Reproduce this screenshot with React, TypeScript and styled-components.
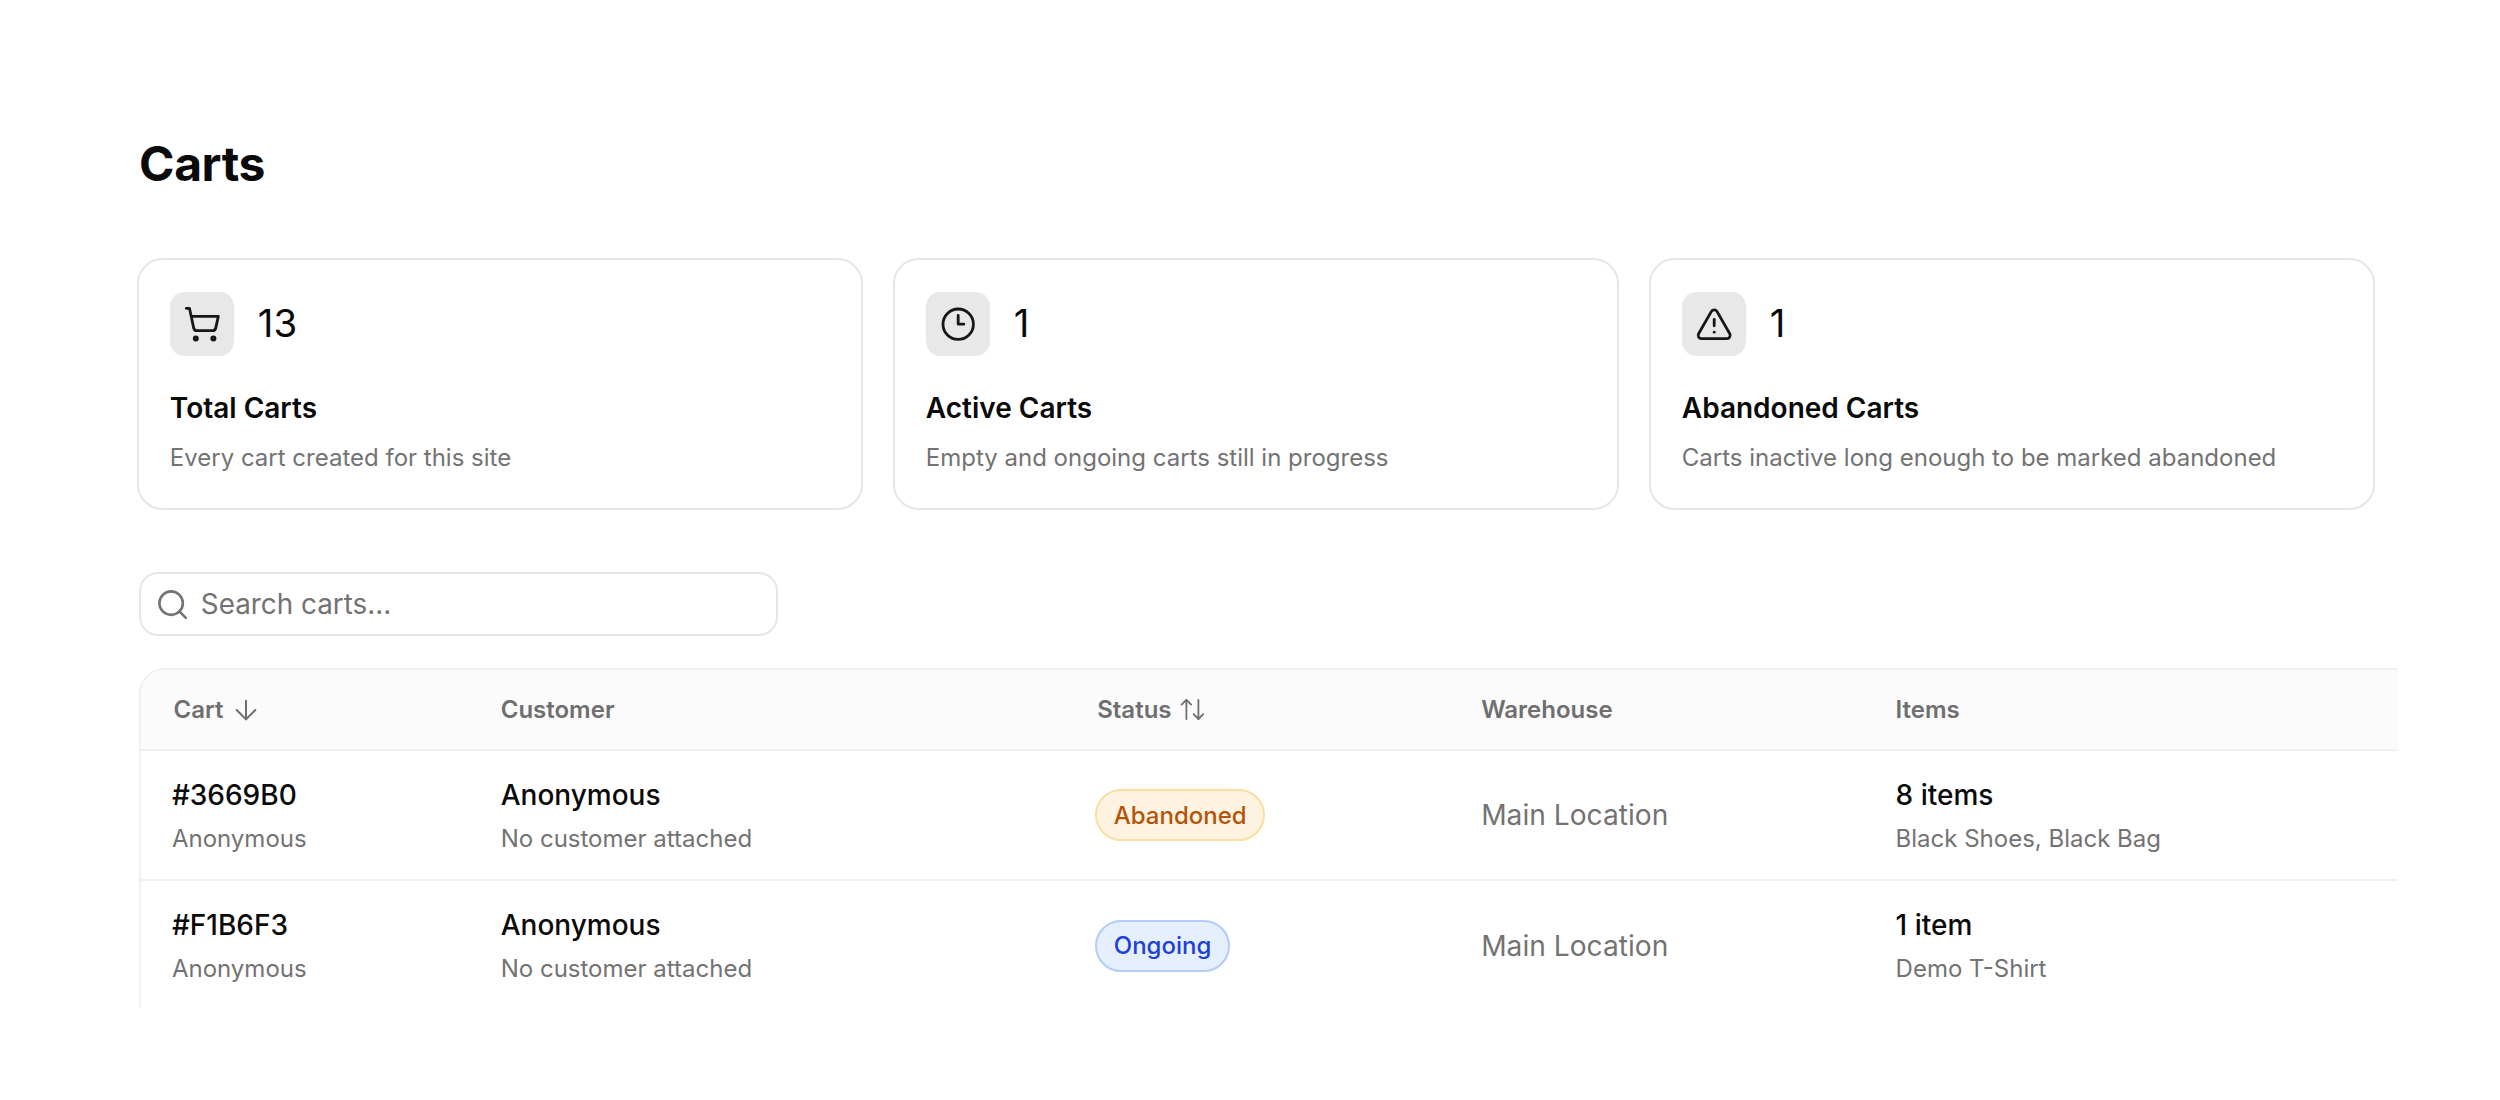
import React from "react";
import styled, { createGlobalStyle } from "styled-components";
import { ShoppingCart, TriangleAlert, Search, ArrowDown, ArrowUpDown } from "lucide-react";

const Global = createGlobalStyle`
  html, body { margin: 0; padding: 0; background: #fff; }
  body { font-family: Inter, "Liberation Sans", sans-serif; color: #0a0a0a; overflow: hidden; }
  * { box-sizing: border-box; }
`;

const Page = styled.main`
  zoom: 1.6;
  display: flex;
  flex-direction: column;
  align-items: flex-start;
  width: 1562.5px;
  height: 687.5px;
  padding: 84.6px 0 0 86.9px;
`;

const Title = styled.h1`
  margin: 0 0 40.5px;
  font-size: 30px;
  line-height: 36px;
  font-weight: 700;
  letter-spacing: -0.25px;
`;

const Cards = styled.section`
  display: grid;
  grid-template-columns: repeat(3, 453.8px);
  gap: 18.7px;
  margin: 0 0 39px -1.4px;
`;

const Card = styled.article`
  height: 157.5px;
  padding: 20.2px 19.4px;
  border: 1.3px solid #e6e6e6;
  border-radius: 16px;
`;

const CardHead = styled.div`
  display: flex;
  align-items: center;
  gap: 15px;
  margin-bottom: 20.6px;
`;

const IconBox = styled.span`
  display: flex;
  align-items: center;
  justify-content: center;
  width: 40px;
  height: 40px;
  border-radius: 9px;
  background: #e8e8e8;
  color: #171717;
`;

const Count = styled.span`
  font-size: 24px;
  line-height: 32px;
  font-weight: 400;
`;

const CardTitle = styled.h2`
  margin: 0 0 9.4px;
  font-size: 17.5px;
  line-height: 24px;
  font-weight: 600;
`;

const CardText = styled.p`
  margin: 0;
  font-size: 15px;
  line-height: 20px;
  color: #737373;
`;

const SearchBox = styled.label`
  display: flex;
  align-items: center;
  gap: 6.4px;
  width: 399.5px;
  height: 40px;
  padding-left: 9px;
  margin-bottom: 20px;
  border: 1.3px solid #e6e6e6;
  border-radius: 12px;
  color: #737373;
`;

const SearchInput = styled.input`
  flex: 1;
  min-width: 0;
  border: 0;
  outline: 0;
  padding: 0;
  background: transparent;
  font: 400 17.4px Inter, sans-serif;
  &::placeholder { color: #737373; opacity: 1; }
`;

const TableFrame = styled.section`
  width: 1412px;
  height: 212.5px;
  overflow: hidden;
  border-top: 1.3px solid #f0f0f0;
  border-left: 1.3px solid #f0f0f0;
  border-top-left-radius: 16px;
`;

const Row = styled.div`
  display: grid;
  grid-template-columns: 224.8px 372.8px 240px 259px 1fr;
  align-items: center;
  border-bottom: 1.3px solid #f0f0f0;
`;

const HeadRow = styled(Row)`
  height: 50.6px;
  background: #fbfbfb;
`;

const BodyRow = styled(Row)`
  height: 81.5px;
`;

const HeadCell = styled.div<{ $first?: boolean }>`
  display: flex;
  align-items: center;
  gap: 4px;
  padding-left: ${(p) => (p.$first ? "20.3px" : "0")};
  font-size: 15px;
  font-weight: 600;
  color: #6f6f6f;
`;

const Cell = styled.div<{ $first?: boolean }>`
  padding-left: ${(p) => (p.$first ? "19.3px" : "0")};
`;

const CenterCell = styled.div`
  display: flex;
  align-items: center;
`;

const Primary = styled.div`
  font-size: 17.5px;
  line-height: 24px;
  font-weight: 500;
`;

const Secondary = styled.div`
  margin-top: 5.4px;
  font-size: 15px;
  line-height: 20px;
  color: #737373;
`;

const Plain = styled.div`
  font-size: 17.6px;
  color: #737373;
`;

const tones = {
  amber: { bg: "#fdf3e0", line: "#f9dfa0", fg: "#b45309" },
  blue: { bg: "#e6effe", line: "#b3ccfc", fg: "#1d40d8" },
};

const Badge = styled.span<{ $tone: "amber" | "blue" }>`
  display: inline-flex;
  align-items: center;
  height: 32.5px;
  margin-left: -1.2px;
  padding: 0 10.3px;
  border-radius: 16.25px;
  font-size: 15px;
  font-weight: 500;
  background: ${(p) => tones[p.$tone].bg};
  border: 1.3px solid ${(p) => tones[p.$tone].line};
  color: ${(p) => tones[p.$tone].fg};
`;

const ClockIcon = () => (
  <svg width="24" height="24" viewBox="0 0 24 24" fill="none" stroke="currentColor" strokeWidth="1.75" strokeLinecap="round" strokeLinejoin="round">
    <circle cx="12" cy="12" r="9.5" />
    <path d="M12 6.5V12h3.5" />
  </svg>
);

const cards = [
  { icon: <ShoppingCart size={24} strokeWidth={1.75} />, n: "13", t: "Total Carts", d: "Every cart created for this site" },
  { icon: <ClockIcon />, n: "1", t: "Active Carts", d: "Empty and ongoing carts still in progress" },
  { icon: <TriangleAlert size={24} strokeWidth={1.75} />, n: "1", t: "Abandoned Carts", d: "Carts inactive long enough to be marked abandoned" },
];

const rows = [
  { id: "#3669B0", status: "Abandoned", tone: "amber" as const, items: "8 items", list: "Black Shoes, Black Bag" },
  { id: "#F1B6F3", status: "Ongoing", tone: "blue" as const, items: "1 item", list: "Demo T-Shirt" },
];

export default function App() {
  return (
    <>
      <Global />
      <Page>
        <Title>Carts</Title>
        <Cards>
          {cards.map((c) => (
            <Card key={c.t}>
              <CardHead>
                <IconBox>{c.icon}</IconBox>
                <Count>{c.n}</Count>
              </CardHead>
              <CardTitle>{c.t}</CardTitle>
              <CardText>{c.d}</CardText>
            </Card>
          ))}
        </Cards>
        <SearchBox>
          <Search size={22} strokeWidth={1.75} />
          <SearchInput placeholder="Search carts..." />
        </SearchBox>
        <TableFrame>
          <HeadRow>
            <HeadCell $first>Cart <ArrowDown size={20} strokeWidth={1.5} /></HeadCell>
            <HeadCell>Customer</HeadCell>
            <HeadCell>Status <ArrowUpDown size={18} strokeWidth={1.5} /></HeadCell>
            <HeadCell>Warehouse</HeadCell>
            <HeadCell>Items</HeadCell>
          </HeadRow>
          {rows.map((r) => (
            <BodyRow key={r.id}>
              <Cell $first>
                <Primary>{r.id}</Primary>
                <Secondary>Anonymous</Secondary>
              </Cell>
              <Cell>
                <Primary>Anonymous</Primary>
                <Secondary>No customer attached</Secondary>
              </Cell>
              <CenterCell>
                <Badge $tone={r.tone}>{r.status}</Badge>
              </CenterCell>
              <CenterCell>
                <Plain>Main Location</Plain>
              </CenterCell>
              <Cell>
                <Primary>{r.items}</Primary>
                <Secondary>{r.list}</Secondary>
              </Cell>
            </BodyRow>
          ))}
        </TableFrame>
      </Page>
    </>
  );
}
